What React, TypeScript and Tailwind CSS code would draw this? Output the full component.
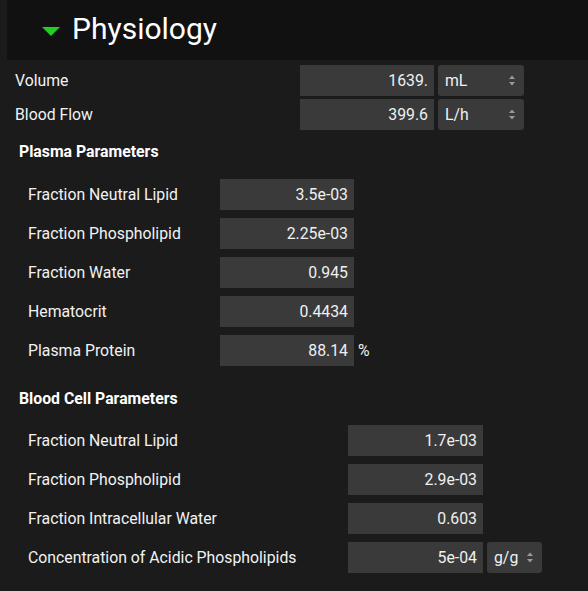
import React from 'react';

type Row = { label: string; value: string; unit?: string; suffix?: string };

const topRows: Row[] = [
  { label: 'Volume', value: '1639.', unit: 'mL' },
  { label: 'Blood Flow', value: '399.6', unit: 'L/h' },
];

const plasmaRows: Row[] = [
  { label: 'Fraction Neutral Lipid', value: '3.5e-03' },
  { label: 'Fraction Phospholipid', value: '2.25e-03' },
  { label: 'Fraction Water', value: '0.945' },
  { label: 'Hematocrit', value: '0.4434' },
  { label: 'Plasma Protein', value: '88.14', suffix: '%' },
];

const bloodRows: Row[] = [
  { label: 'Fraction Neutral Lipid', value: '1.7e-03' },
  { label: 'Fraction Phospholipid', value: '2.9e-03' },
  { label: 'Fraction Intracellular Water', value: '0.603' },
  { label: 'Concentration of Acidic Phospholipids', value: '5e-04', unit: 'g/g' },
];

function Arrows() {
  return (
    <svg width="8" height="13" viewBox="0 0 8 13" className="text-[#9a9a9a]">
      <path d="M1 5 L4 1.5 L7 5 Z" fill="currentColor" />
      <path d="M1 8 L4 11.5 L7 8 Z" fill="currentColor" />
    </svg>
  );
}

function NumberBox({ value, width }: { value: string; width: string }) {
  return (
    <div className={`${width} h-[31px] bg-[#3a3a3a] flex items-center justify-end pr-[6px] text-[#f0f0f0]`}>
      {value}
    </div>
  );
}

function UnitSelect({ unit, width }: { unit: string; width: string }) {
  return (
    <div className={`${width} h-[31px] ml-[4px] rounded-[3px] bg-[#3a3a3a] flex items-center justify-between pl-[7px] pr-[8px] text-[#f0f0f0]`}>
      <span>{unit}</span>
      <Arrows />
    </div>
  );
}

export default function App() {
  return (
    <div
      className="w-[588px] h-[591px] bg-[#1b1b1b] text-[15.8px] text-[#f2f2f2] overflow-hidden"
      style={{ fontFamily: 'Roboto, "Liberation Sans", sans-serif' }}
    >
      {/* ── Header ─────────────────────────────────────────── */}
      <div className="ml-[7px] h-[60px] bg-[#111111] flex items-center pl-[35px]">
        <svg width="18" height="9" viewBox="0 0 18 9" className="mt-[2px]">
          <path d="M0 0 L18 0 L9 9 Z" fill="#1fd11f" />
        </svg>
        <span className="ml-[12px] text-[30px] leading-none text-white mb-[2px]">Physiology</span>
      </div>

      {/* ── Volume / flow ──────────────────────────────────── */}
      <div className="pt-[5px] pl-[15px] flex flex-col gap-[3px]">
        {topRows.map((r) => (
          <div key={r.label} className="flex items-center h-[31px]">
            <div className="w-[285px]">{r.label}</div>
            <NumberBox value={r.value} width="w-[134px]" />
            {r.unit && <UnitSelect unit={r.unit} width="w-[86px]" />}
          </div>
        ))}
      </div>

      {/* ── Plasma ─────────────────────────────────────────── */}
      <div className="mt-[12px] pl-[19px] h-[20px] leading-[20px] font-bold text-white">Plasma Parameters</div>
      <div className="mt-[17px] pl-[28px] flex flex-col gap-[8px]">
        {plasmaRows.map((r) => (
          <div key={r.label} className="flex items-center h-[31px]">
            <div className="w-[192px]">{r.label}</div>
            <NumberBox value={r.value} width="w-[134px]" />
            {r.suffix && <span className="ml-[4px]">{r.suffix}</span>}
          </div>
        ))}
      </div>

      {/* ── Blood cell ─────────────────────────────────────── */}
      <div className="mt-[23px] pl-[19px] h-[20px] leading-[20px] font-bold text-white">Blood Cell Parameters</div>
      <div className="mt-[16px] pl-[28px] flex flex-col gap-[8px]">
        {bloodRows.map((r) => (
          <div key={r.label} className="flex items-center h-[31px]">
            <div className="w-[320px]">{r.label}</div>
            <NumberBox value={r.value} width="w-[135px]" />
            {r.unit && <UnitSelect unit={r.unit} width="w-[55px]" />}
          </div>
        ))}
      </div>
    </div>
  );
}
